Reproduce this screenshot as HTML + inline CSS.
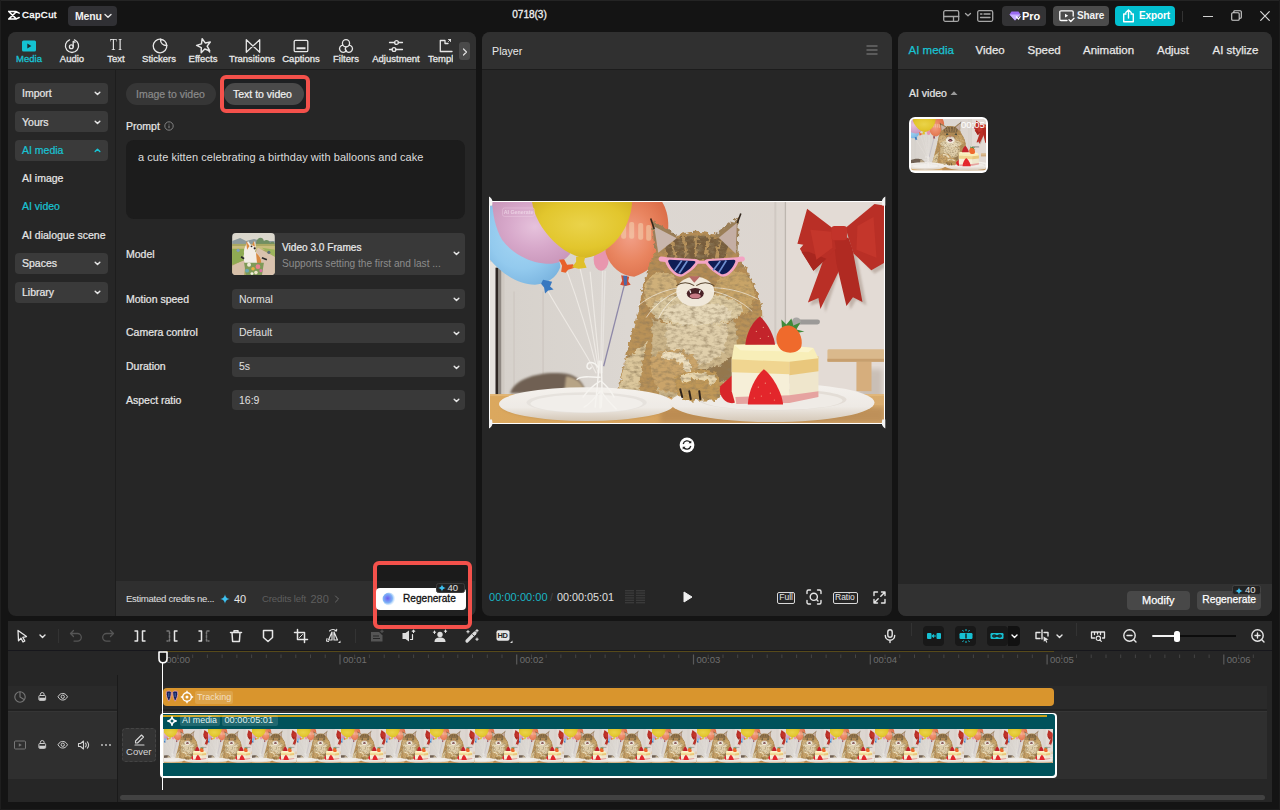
<!DOCTYPE html>
<html lang="en">
<head>
<meta charset="utf-8">
<title>CapCut</title>
<style>
*{box-sizing:border-box;margin:0;padding:0}
html,body{width:1280px;height:810px;overflow:hidden;background:#141414}
body{position:relative;font-family:"Liberation Sans",sans-serif;font-size:11px;color:#e6e6e6;-webkit-font-smoothing:antialiased}
.abs{position:absolute}
.t{position:absolute;white-space:nowrap;line-height:14px;height:14px}
.panel{position:absolute;background:#262626;border-radius:8px;overflow:hidden}
.phead{position:absolute;left:0;top:0;right:0;height:38px;background:#303030;border-bottom:1px solid #1c1c1c}
svg{position:absolute;overflow:visible}
.ic{fill:none;stroke:#e6e6e6;stroke-width:1.3;stroke-linecap:round;stroke-linejoin:round}
.sbtn{position:absolute;left:15px;width:93px;height:21px;background:#3a3a3a;border-radius:4px}
.sel{position:absolute;left:232px;width:233px;height:20px;background:#393939;border-radius:4px}
#left .t,#right .t{margin-top:-.4px}
#tabs .t{-webkit-text-stroke:.3px currentColor;margin-top:0}
.sbtn2{background:#3a3a3a}
.chev{position:absolute;width:7px;height:7px}
</style>
</head>
<body>
<!--SYM-->
<svg width="0" height="0" style="position:absolute;left:-10px;top:-10px">
<defs>
<filter id="b1" x="-10%" y="-10%" width="120%" height="120%"><feGaussianBlur stdDeviation="1.2"/></filter>
<filter id="b2" x="-10%" y="-10%" width="120%" height="120%"><feGaussianBlur stdDeviation="2.500"/></filter>
<filter id="fur" x="-10%" y="-10%" width="120%" height="120%"><feTurbulence type="fractalNoise" baseFrequency=".22" numOctaves="2" seed="4" result="n"/><feDisplacementMap in="SourceGraphic" in2="n" scale="7" xChannelSelector="R" yChannelSelector="G" result="d"/><feTurbulence type="fractalNoise" baseFrequency=".16 .3" numOctaves="3" seed="9" result="n2"/><feColorMatrix in="n2" type="matrix" values="0 0 0 0 .28  0 0 0 0 .2  0 0 0 0 .1  0 0 0 1.700 -.7" result="tex"/><feComposite in="tex" in2="d" operator="in" result="texc"/><feMerge><feMergeNode in="d"/><feMergeNode in="texc"/></feMerge><feGaussianBlur stdDeviation=".45"/></filter>
<filter id="b05" x="-10%" y="-10%" width="120%" height="120%"><feGaussianBlur stdDeviation=".5"/></filter>
<linearGradient id="wallg" x1="0" x2="1" y1="0" y2="0"><stop offset="0" stop-color="#d6d1cb"/><stop offset=".35" stop-color="#dcd7d2"/><stop offset=".75" stop-color="#ddd6d0"/><stop offset="1" stop-color="#e6ddd6"/></linearGradient>
<linearGradient id="tableg" x1="0" x2="1" y1="0" y2="0"><stop offset="0" stop-color="#dba85e"/><stop offset=".5" stop-color="#d6a35f"/><stop offset="1" stop-color="#d9ac6e"/></linearGradient>
<radialGradient id="blueg" cx=".45" cy=".35" r=".75"><stop offset="0" stop-color="#a8d8f4"/><stop offset=".6" stop-color="#93caee"/><stop offset="1" stop-color="#78b2de"/></radialGradient>
<radialGradient id="pinkg" cx=".55" cy=".4" r=".7"><stop offset="0" stop-color="#e6c2dc"/><stop offset=".5" stop-color="#d7a8ca"/><stop offset="1" stop-color="#c794b8"/></radialGradient>
<radialGradient id="yellowg" cx=".5" cy=".4" r=".7"><stop offset="0" stop-color="#ead34a"/><stop offset=".6" stop-color="#e2c62d"/><stop offset="1" stop-color="#cfae1e"/></radialGradient>
<radialGradient id="orangeg" cx=".4" cy=".45" r=".7"><stop offset="0" stop-color="#f2a089"/><stop offset=".5" stop-color="#e98560"/><stop offset="1" stop-color="#d96a45"/></radialGradient>
<radialGradient id="furg" cx=".5" cy=".45" r=".6"><stop offset="0" stop-color="#efe4cc"/><stop offset=".55" stop-color="#e3d1ab"/><stop offset="1" stop-color="#c29c62"/></radialGradient>
<linearGradient id="plateg" x1="0" x2="0" y1="0" y2="1"><stop offset="0" stop-color="#f4f1ed"/><stop offset=".6" stop-color="#eeeae5"/><stop offset="1" stop-color="#d4c7b6"/></linearGradient>
<symbol id="cat" viewBox="0 0 394 222" preserveAspectRatio="xMidYMid slice">
<rect width="394" height="222" fill="url(#wallg)"/>
<!-- door left -->
<rect x="0" y="60" width="6" height="135" fill="#e6e2dd"/>
<rect x="5.500" y="66" width="3" height="128" fill="#2e2824" filter="url(#b05)"/>
<rect x="8.500" y="66" width="3" height="128" fill="#8f8882" filter="url(#b05)"/>
<rect x="11.500" y="66" width="3" height="128" fill="#cfc9c2"/>
<path d="M24 90V190M53 90V185" stroke="#cfc9c3" stroke-width="1.500" fill="none"/>
<!-- right door -->
<rect x="296" y="0" width="98" height="200" fill="#e3dbd5"/>
<path d="M295 0V200" stroke="#bdb5ae" stroke-width="1.200"/>
<path d="M285 0V200" stroke="#d0c9c3" stroke-width="2"/>
<!-- handle -->
<path d="M305 120.500H327" stroke="#9c9a98" stroke-width="5" stroke-linecap="round"/>
<circle cx="306" cy="120.500" r="4.500" fill="#a8a6a4"/>
<path d="M306 128H328" stroke="#c5beb8" stroke-width="4" stroke-linecap="round" filter="url(#b1)"/>
<!-- small table right -->
<path d="M368 168H392V200H368Z" fill="#c9bfb6" filter="url(#b2)"/>
<rect x="366" y="160" width="15" height="30" fill="#d6ae7d"/>
<rect x="337" y="148" width="57" height="12.500" rx="1.500" fill="#dab98c"/>
<rect x="337" y="157.500" width="57" height="3" fill="#c79f6e"/>
<!-- bow shadow -->
<path d="M312 44L326 72L332 62L320 104L333 100L335 111L350 66L360 108L366 98L376 104L366 52L384 72L394 66V10Z" fill="#b9aaa0" filter="url(#b1)" opacity=".8"/>
<!-- bow -->
<g fill="#b92f26">
<path d="M341 36L317.500 101L328 96.500L330 107.500L352 62V36Z"/>
<path d="M343 36H358L362 47L372 100.500L362.500 95.700L356 104.500L346 62Z" fill="#b02a22"/>
<path d="M316.700 6.800L342 26L345.500 47L323 69L309.500 47L313 43L307 42Z"/>
<path d="M311 50L323 69L336 57L318 50Z" fill="#a8261f"/>
<path d="M384 2L394 3.500V61L380.800 68.500L363 51.600L355 26Z"/>
<path d="M367 24L383 15L386 56L366 48Z" fill="#c4362b"/>
<path d="M320 28L341 30L342 46L326 58Z" fill="#c4362b"/>
<rect x="341" y="24" width="15.500" height="14.500" rx="3" fill="#c2332a"/>
</g>
<!-- strings -->
<g fill="none" stroke="#efebe6" stroke-width="1.100" opacity=".95">
<path d="M58 90C75 120 95 150 106 172"/><path d="M77 70C88 100 100 140 108 172"/><path d="M90 67C98 100 104 140 109 172"/><path d="M100 70C104 110 108 150 110 172"/>
</g>
<path d="M112.500 69L110.500 172M115 69L112 172" stroke="#e8e4e0" stroke-width="1.300" fill="none"/>
<path d="M134 84L113.500 165" stroke="#8e88a8" stroke-width="1.300" fill="none"/>
<!-- balloons -->
<ellipse cx="111" cy="58" rx="7.500" ry="11" fill="#e896ae"/>
<path d="M0 4C10 0 30 10 45 30C60 48 72 58 70 66C66 76 58 82 45 83C28 83 12 72 0 58Z" fill="url(#blueg)"/>
<path d="M53 78L62 80L60 85L63.500 88L58 89L55 92L54 86L51 82Z" fill="#3878c0"/>
<path d="M2 0H60L80 52C74 60 66 62.500 56 62C40 61 22 52 12 38C5 26 3 12 2 0Z" fill="url(#pinkg)"/>
<path d="M69 58L74 57.500L77 63L83 62.500L84.500 66L78 68L75.500 71L71 70L72 64Z" fill="#e8612a"/>
<path d="M141.500 0L172 0C178 10 180 24 176 40C172 56 160 70 144 75C130 74 118 64 115 48C114 30 125 10 141.500 0Z" fill="url(#orangeg)"/>
<g fill="#f3d9b6" opacity=".5"><rect x="131" y="21" width="5" height="16" rx="2"/><rect x="139" y="20" width="5" height="17" rx="2"/><rect x="148" y="21" width="5" height="17" rx="2"/><rect x="156" y="23" width="5" height="16" rx="2"/></g>
<path d="M131 73.500L139 75L138 79.500L140.500 83L135 84.500L130 83L132 79Z" fill="#d24a32"/><path d="M133 74L137 74L136.500 84L134 84Z" fill="#4a6aa8"/>
<path d="M42 0H142C141 14 136 28 124 41C114 51 104 55 94 56.500C82 54 72 48 64 40C52 28 44 14 42 0Z" fill="url(#yellowg)"/>
<path d="M86 55H95L94 60L96.500 66L88.500 67L82 65.500L86 60Z" fill="#e0c02a"/>
<!-- table -->
<rect x="0" y="193" width="394" height="29" fill="url(#tableg)"/>
<rect x="0" y="193" width="394" height="2" fill="#e6be82" opacity=".6"/>
<path d="M170 206H394V222H170Z" fill="#a87a48" opacity=".55" filter="url(#b2)"/>
<!-- tail -->
<path d="M20 192C24 178 48 170 72 172C84 173 92 178 96 192Z" fill="#6f6152" filter="url(#b1)"/>
<path d="M76 175C86 176 93 182 96 192H74Z" fill="#b7a486" filter="url(#b1)"/>
<!-- cat body -->
<g filter="url(#fur)">
<path d="M150 100C146 116 140 140 135 158C130 176 127 188 127 197H252L262 150C270 136 274 120 271 104C268 92 262 80 254 70L158 76Z" fill="#b99259"/>
<path d="M136 158C132 172 128 186 128 196H150C148 176 152 156 158 140Z" fill="#dcc79c"/>
<path d="M166 104C158 128 160 164 170 196H240C250 164 250 128 240 104Z" fill="#cdb78c"/>
<path d="M178 112C172 130 176 150 186 160C200 166 222 164 232 152C240 136 238 120 232 110Z" fill="#e0cfab"/>
<path d="M172 150C180 160 196 168 210 168C224 168 238 162 246 150L244 176C232 184 190 184 176 176Z" fill="#94774e"/>
<!-- ears -->
<path d="M161.500 18.400L165 52L192 36Z" fill="#9c7f58"/>
<path d="M248.600 14.200L222 35L247 54Z" fill="#9c7f58"/>
<!-- head -->
<path d="M206 30C228 30 246 42 252 62C262 76 270 92 268 106C260 118 240 124 206 124C172 124 154 118 150 106C150 92 154 76 160 62C166 42 184 30 206 30Z" fill="#b48c54"/>
<path d="M174 42C186 31 226 31 238 42L234 58H178Z" fill="#775d3c"/>
<path d="M181 38L186 56M193 34L196 55M206 33V55M219 34L216 55M230 38L226 56" stroke="#b8935c" stroke-width="3" fill="none"/>
<ellipse cx="172" cy="92" rx="18" ry="22" fill="#cfb07a"/>
<ellipse cx="244" cy="92" rx="20" ry="24" fill="#c8a468"/>
<ellipse cx="207" cy="108" rx="46" ry="17" fill="#dccaa2"/><ellipse cx="207" cy="112" rx="34" ry="12" fill="#e6d8b8"/>
</g>
<g filter="url(#b05)">
<path d="M164 24.500L168 51L186.500 36.500Z" fill="#c9b6ac"/>
<path d="M246.500 21L228.500 36L245.500 52Z" fill="#c4aea4"/>
<path d="M160.500 16.500L164 27" stroke="#33261c" stroke-width="1.600"/>
<path d="M250.500 11.500L247 21" stroke="#33261c" stroke-width="1.600"/>
<ellipse cx="205" cy="90" rx="19" ry="15" fill="#f0e8da"/>
<path d="M186 84C192 80 198 80 204 84M206 84C212 80 218 80 224 84" stroke="#5a4630" stroke-width="1" fill="none"/>
<path d="M198.500 74.500H210L204 81Z" fill="#b76a66"/>
<ellipse cx="205" cy="92" rx="8.500" ry="5.500" fill="#4a2226"/>
<ellipse cx="205" cy="94.500" rx="5.500" ry="2.500" fill="#c77a84"/>
<path d="M199.500 88.500L200.500 91.500M210 88.500L209 91.500" stroke="#fff" stroke-width="1.200"/>
</g>
<!-- whiskers -->
<g stroke="#f7f3ec" stroke-width=".7" fill="none" opacity=".9"><path d="M190 86C175 88 160 94 148 104"/><path d="M190 89C176 94 164 104 156 116"/><path d="M191 92C180 98 172 108 168 118"/><path d="M220 86C236 86 254 90 268 98"/><path d="M220 89C236 92 252 100 262 110"/></g>
<!-- eyes -->
<g><ellipse cx="191" cy="66" rx="5" ry="3.500" fill="#2a2a22"/><ellipse cx="229" cy="66" rx="5" ry="3.500" fill="#2a2a22"/><circle cx="191" cy="66" r="2" fill="#6f9a8a"/><circle cx="229" cy="66" r="2" fill="#6f9a8a"/></g>
<!-- plates -->
<ellipse cx="96.500" cy="205" rx="86" ry="15" fill="#b98c4e" opacity=".5" filter="url(#b1)"/>
<ellipse cx="96.500" cy="203" rx="87.500" ry="17" fill="url(#plateg)"/>
<ellipse cx="96.500" cy="201.500" rx="60" ry="10.500" fill="#e6e2dd"/>
<ellipse cx="96.500" cy="202.500" rx="56" ry="9" fill="#f1eeea"/>
<!-- string bundle -->
<g fill="none" stroke="#f6f4f0" stroke-width="1.400" stroke-linecap="round"><path d="M109 160C108 180 106 196 105 206"/><path d="M111 160C112 180 112 196 111 206"/><path d="M110 176C100 176 92 174 87 178"/><path d="M110 180C100 186 96 192 93 196"/><path d="M111 180C118 186 122 192 124 196"/><path d="M108 166C104 160 98 160 97 164C96 168 101 169 101 166"/><path d="M110 190C104 198 98 204 94 206M111 190C116 198 122 204 126 208M110 190V207"/></g>
<ellipse cx="282" cy="203.500" rx="100" ry="17" fill="#b98c4e" opacity=".5" filter="url(#b1)"/>
<ellipse cx="282" cy="201.500" rx="102" ry="19.500" fill="url(#plateg)"/>
<ellipse cx="282" cy="198.500" rx="74" ry="11" fill="#e3ddd6"/>
<ellipse cx="282" cy="199.500" rx="70" ry="9.500" fill="#efebe6"/>
<!-- paws -->
<g filter="url(#fur)">
<path d="M164 154C172 146 198 146 206 158C210 170 204 186 194 192L172 190C160 180 158 164 164 154Z" fill="#caa46a"/>
<path d="M172 152C184 148 198 154 202 166L196 172C192 160 184 156 172 158Z" fill="#eddfbf"/>
<path d="M186 176C196 166 222 166 230 176C234 186 232 196 224 199.500H196C186 196 182 184 186 176Z" fill="#c09858"/>
<path d="M190 176C200 168 220 170 226 178L222 183C214 176 202 176 192 182Z" fill="#e8d6ae"/>
</g>
<path d="M190 188L192 196M199 190L200.500 198M209 190L210 198" stroke="#2e241c" stroke-width="2" stroke-linecap="round" filter="url(#b05)"/>
<!-- cake -->
<path d="M230 185C228 192 232 200 240 202C246 203 249 198 248 190L244 172Z" fill="#d8262a"/>
<path d="M241.400 158L299 160V200L245 203L241.400 190Z" fill="#f6efd8"/>
<path d="M299 160L328 157V195.500L299 201Z" fill="#efe6cc"/>
<path d="M241.400 156L299 158V173L241.400 171Z" fill="#f0d590"/>
<path d="M299 158L328 155V170L299 174Z" fill="#e9c77c"/>
<path d="M245 196L299 194V202L246 203ZM299 194L328 190V196L299 202Z" fill="#e6a3a0"/>
<path d="M243.800 143.400L284.700 142.600L323 146.600L328 157L299 160.500L241.400 158Z" fill="#f8eeb8"/>
<path d="M243.800 143.400L284.700 142.600L323 146.600L318 151L290 150L250 149Z" fill="#fbf4cc"/>
<!-- strawberries -->
<path d="M269.500 115C276 120 284 134 284.700 143.500L255 143.500C256 132 262 120 269.500 115Z" fill="#c3242b"/>
<path d="M291 118L296 123L301 117L303 124L310 121L306 128L314 130L304 132H292Z" fill="#3f8a3a"/>
<path d="M299 124C308 126 313 136 311 145C309 151 300 153 293 150C286 146 284 136 288 130C290 126 294 124 299 124Z" fill="#ef6a2c"/>
<path d="M273.500 168C282 174 292 192 292.700 203.500L257.500 203.500C258 190 265 175 273.500 168Z" fill="#e3262b"/>
<g fill="#f6c9a0" opacity=".7"><circle cx="268" cy="186" r=".6"/><circle cx="275" cy="182" r=".6"/><circle cx="280" cy="192" r=".6"/><circle cx="271" cy="195" r=".6"/><circle cx="264" cy="197" r=".6"/><circle cx="284" cy="199" r=".6"/><circle cx="266" cy="130" r=".6"/><circle cx="273" cy="126" r=".6"/><circle cx="270" cy="137" r=".6"/><circle cx="278" cy="135" r=".6"/></g>
</symbol>
</defs>
</svg>
<!--/SYM-->
<!-- TOPBAR -->
<div id="topbar" class="abs" style="left:0;top:0;width:1280px;height:32px">
<svg style="left:0;top:0" width="24" height="24" viewBox="0 0 24 24"><path d="M8.700 11.500H15.800L19.200 13.100M8.700 19.100H15.800L19.200 17.500M8.700 11.500L16.300 18.900M8.700 19.100L16.300 11.700" fill="none" stroke="#fff" stroke-width="1.500" stroke-linejoin="round" stroke-linecap="round"/></svg>
<div class="t" style="left:22px;top:8px;font-size:9.600px;color:#fff;letter-spacing:.4px;-webkit-text-stroke:.35px #fff">CapCut</div>
<div class="abs" style="left:68px;top:6px;width:49px;height:20px;background:#303034;border-radius:4px"></div>
<div class="t" style="left:75px;top:8.500px;font-size:10.5px;font-weight:bold;color:#f0f0f0;letter-spacing:-0.2px">Menu</div>
<svg style="left:104px;top:13px" width="8" height="6" viewBox="0 0 8 6"><path d="M1 1.500L4 4.300L7 1.500" class="ic" style="stroke-width:1.400"/></svg>
<div class="t" style="left:489.500px;top:7.500px;width:80px;text-align:center;font-size:10px;color:#f0f0f0;-webkit-text-stroke:.3px #f0f0f0">0718(3)</div>
<!-- layout icon -->
<svg style="left:943px;top:10px" width="17" height="12" viewBox="0 0 17 12"><rect x=".7" y=".7" width="15" height="10.600" rx="1.500" class="ic" style="stroke:#a6a6a6"/><path d="M.7 6.500H15.700M10.500 6.500V11.300" class="ic" style="stroke:#a6a6a6"/></svg>
<svg style="left:964px;top:12px" width="8" height="6" viewBox="0 0 8 6"><path d="M1.500 1.500L4 3.800L6.500 1.500" class="ic" style="stroke:#a6a6a6"/></svg>
<svg style="left:977px;top:10px" width="17" height="12" viewBox="0 0 17 12"><rect x=".7" y=".7" width="15" height="10.600" rx="1.500" class="ic" style="stroke:#a6a6a6"/><path d="M3.500 4H5M7 4H13M3.500 7.500H13" class="ic" style="stroke:#a6a6a6"/></svg>
<!-- Pro -->
<div class="abs" style="left:1002px;top:6px;width:44px;height:20px;background:#333335;border-radius:4px"></div>
<svg style="left:1009px;top:11px" width="12" height="10" viewBox="0 0 12 10"><path d="M2.500 .5H9.500L11.500 3.500L6 9.500L.5 3.500Z" fill="#9a6bf0"/><path d="M.5 3.500H11.500L6 9.500Z" fill="#c9b3ff"/><path d="M7 5.500L9.500 8L11.500 5" fill="none" stroke="#fff" stroke-width="1.200"/></svg>
<div class="t" style="left:1022px;top:8.500px;font-size:11px;font-weight:bold;color:#fff">Pro</div>
<!-- Share -->
<div class="abs" style="left:1053px;top:6px;width:56px;height:20px;background:#4b4b4b;border-radius:4px"></div>
<svg style="left:1059px;top:10px" width="16" height="13" viewBox="0 0 16 13"><path d="M8 10.500H2A1.200 1.200 0 0 1 .8 9.300V2A1.200 1.200 0 0 1 2 .8H13A1.200 1.200 0 0 1 14.200 2V6" class="ic" style="stroke:#fff"/><path d="M6 3.800V7.600L9.200 5.700Z" fill="#fff"/><path d="M10 9.800L11.800 11.500L15 8.200" class="ic" style="stroke:#fff"/></svg>
<div class="t" style="left:1077px;top:8.500px;font-size:10px;font-weight:bold;color:#f2f2f2;letter-spacing:-0.100px">Share</div>
<!-- Export -->
<div class="abs" style="left:1115px;top:6px;width:60px;height:20px;background:#02bfcf;border-radius:4px"></div>
<svg style="left:1122px;top:9px" width="13" height="14" viewBox="0 0 13 14"><path d="M4 5H1.700V12.800H11.300V5H9M6.500 9V1.200M3.800 3.600L6.500 1L9.200 3.600" class="ic" style="stroke:#fff;stroke-width:1.400"/></svg>
<div class="t" style="left:1139px;top:8.500px;font-size:10px;font-weight:bold;color:#fff;letter-spacing:-0.100px">Export</div>
<div class="abs" style="left:1182px;top:11px;width:1px;height:11px;background:#333"></div>
<div class="abs" style="left:1203px;top:15.500px;width:10px;height:1.200px;background:#d0d0d0"></div>
<svg style="left:1231px;top:10px" width="11" height="11" viewBox="0 0 11 11"><rect x=".7" y="2.700" width="7.500" height="7.500" rx="1" class="ic" style="stroke:#d0d0d0;stroke-width:1.100"/><path d="M2.800 2.500V1.700A1 1 0 0 1 3.800 .7H9.300A1 1 0 0 1 10.300 1.700V7.200A1 1 0 0 1 9.300 8.200H8.500" class="ic" style="stroke:#d0d0d0;stroke-width:1.100"/></svg>
<svg style="left:1260px;top:11px" width="10" height="10" viewBox="0 0 10 10"><path d="M.7 .7L9.300 9.300M9.300 .7L.7 9.300" class="ic" style="stroke:#d8d8d8;stroke-width:1.200"/></svg>
</div>
<!-- LEFT PANEL -->
<div id="left" class="panel" style="left:8px;top:32px;width:467.500px;height:584px">
<div class="phead"></div>
<div class="abs" style="left:107px;top:37px;width:1px;height:547px;background:#1d1d1d"></div>
<div id="tabs" class="abs" style="left:0;top:0;width:445px;height:37px;overflow:hidden">
<div class="t" style="left:-19px;width:80px;text-align:center;top:20px;font-size:9.500px;color:#19c3d3">Media</div>
<div class="t" style="left:24px;width:80px;text-align:center;top:20px;font-size:9.500px;color:#e8e8e8">Audio</div>
<div class="t" style="left:68px;width:80px;text-align:center;top:20px;font-size:9.500px;color:#e8e8e8">Text</div>
<div class="t" style="left:111px;width:80px;text-align:center;top:20px;font-size:9.500px;color:#e8e8e8">Stickers</div>
<div class="t" style="left:155px;width:80px;text-align:center;top:20px;font-size:9.500px;color:#e8e8e8">Effects</div>
<div class="t" style="left:204px;width:80px;text-align:center;top:20px;font-size:9.500px;color:#e8e8e8">Transitions</div>
<div class="t" style="left:253px;width:80px;text-align:center;top:20px;font-size:9.500px;color:#e8e8e8">Captions</div>
<div class="t" style="left:298px;width:80px;text-align:center;top:20px;font-size:9.500px;color:#e8e8e8">Filters</div>
<div class="t" style="left:348px;width:80px;text-align:center;top:20px;font-size:9.500px;color:#e8e8e8">Adjustment</div>
<div class="t" style="left:420px;top:20px;font-size:9.500px;color:#e8e8e8">Templates</div>
<svg style="left:13.0px;top:5.5px" width="16" height="16" viewBox="0 0 16 16"><rect x="1" y="2.500" width="14" height="11" rx="1.500" fill="#14c2d2"/><path d="M6.300 5.600V10.400L10.400 8Z" fill="#1d2a2c"/></svg>
<svg style="left:56.0px;top:5.5px" width="16" height="16" viewBox="0 0 16 16"><path d="M10.500 1.800A6.600 6.600 0 1 1 5.500 1.800" class="ic"/><circle cx="7.300" cy="8.800" r="1.900" class="ic"/><path d="M9.200 8.800V3.300L11 4.300" class="ic"/></svg>
<div class="t" style="left:88px;width:40px;text-align:center;top:4px;height:18px;line-height:18px;font-family:'Liberation Serif',serif;font-size:16.500px;color:#e8e8e8;letter-spacing:2.200px;text-indent:2.200px;transform:scaleX(.68);-webkit-text-stroke:0">TI</div>
<svg style="left:144.0px;top:5.5px" width="16" height="16" viewBox="0 0 16 16"><path d="M8.500 1.200A6.800 6.800 0 1 0 14.800 7.500" class="ic"/><path d="M8.500 1.200C8.300 5 11 7.700 14.800 7.500C14.300 4.300 11.700 1.700 8.500 1.200Z" class="ic"/></svg>
<svg style="left:187.5px;top:5.5px" width="16" height="16" viewBox="0 0 16 16"><path d="M8 1.200L9.700 5.600L14.300 5.900L10.700 8.800L11.900 13.300L8 10.800L4.100 13.300L5.300 8.800L1.700 5.900L6.300 5.600Z" class="ic" transform="rotate(-14 8 8) translate(8 8) scale(1.120) translate(-8 -8)"/><path d="M12.300 12.300L13.800 14" class="ic"/></svg>
<svg style="left:236.5px;top:5.5px" width="16" height="16" viewBox="0 0 16 16"><path d="M1.300 1.700V14.300L14.700 1.700V14.300Z" class="ic"/></svg>
<svg style="left:285.0px;top:5.5px" width="16" height="16" viewBox="0 0 16 16"><rect x="1.200" y="2.300" width="13.600" height="11.400" rx="1.300" class="ic"/><path d="M3.500 9.200H12.500V11.300H3.500Z" fill="#e6e6e6"/></svg>
<svg style="left:330.0px;top:5.5px" width="16" height="16" viewBox="0 0 16 16"><circle cx="8" cy="5.200" r="3.600" class="ic"/><path d="M4.900 7.100A3.600 3.600 0 1 0 8.300 12.400" class="ic"/><path d="M11.100 7.100A3.600 3.600 0 1 1 7.700 12.400A3.600 3.600 0 0 1 8 8.800" class="ic"/></svg>
<svg style="left:380.0px;top:5.5px" width="16" height="16" viewBox="0 0 16 16"><path d="M1.500 4.500H6.700M10.300 4.500H14.500M1.500 11.500H4.200M7.800 11.500H14.500" class="ic"/><circle cx="8.500" cy="4.500" r="1.900" class="ic"/><circle cx="6" cy="11.500" r="1.900" class="ic"/></svg>
<svg style="left:430.0px;top:5.5px" width="16" height="16" viewBox="0 0 16 16"><path d="M7 2.500H2.300V13.500H14M7 2.500V5.500H10" class="ic"/><path d="M10.500 3.500L12.500 1.500M12.500 1.500V3.500M12.500 1.500H10.500" class="ic" style="stroke-width:.9"/></svg>
</div>
<div class="abs" style="left:451px;top:10px;width:11px;height:18px;background:#4a4a4a;border-radius:3px"></div>
<svg style="left:453.500px;top:15.500px" width="6" height="8" viewBox="0 0 6 8"><path d="M1.500 1L4.500 4L1.500 7" fill="none" stroke="#e0e0e0" stroke-width="1.200" stroke-linecap="round" stroke-linejoin="round"/></svg>
<div class="abs" style="left:7px;top:51px;width:93px;height:21px;background:#3a3a3a;border-radius:4px"></div><div class="t" style="left:14px;top:54.5px;font-size:10.5px;color:#e6e6e6;-webkit-text-stroke:.22px currentColor;">Import</div><svg style="left:85.5px;top:58.0px" width="7" height="7" viewBox="0 0 7 7"><path d="M1.200 2.300L3.500 4.500L5.800 2.300" fill="none" stroke="#e6e6e6" stroke-width="1.500" stroke-linecap="round" stroke-linejoin="round"/></svg>
<div class="abs" style="left:7px;top:79px;width:93px;height:21px;background:#3a3a3a;border-radius:4px"></div><div class="t" style="left:14px;top:83.0px;font-size:10.5px;color:#e6e6e6;-webkit-text-stroke:.22px currentColor;">Yours</div><svg style="left:85.5px;top:86.5px" width="7" height="7" viewBox="0 0 7 7"><path d="M1.200 2.300L3.500 4.500L5.800 2.300" fill="none" stroke="#e6e6e6" stroke-width="1.500" stroke-linecap="round" stroke-linejoin="round"/></svg>
<div class="abs" style="left:7px;top:107.5px;width:93px;height:21px;background:#3a3a3a;border-radius:4px"></div><div class="t" style="left:14px;top:111.0px;font-size:10.5px;color:#19c3d3;-webkit-text-stroke:.22px currentColor;">AI media</div><svg style="left:85.5px;top:114.5px" width="7" height="7" viewBox="0 0 7 7"><path d="M1.200 4.500L3.500 2.300L5.800 4.500" fill="none" stroke="#19c3d3" stroke-width="1.500" stroke-linecap="round" stroke-linejoin="round"/></svg>
<div class="t" style="left:14px;top:139px;font-size:10.5px;color:#e6e6e6;-webkit-text-stroke:.22px currentColor;">AI image</div>
<div class="t" style="left:14px;top:167.5px;font-size:10.5px;color:#19c3d3;-webkit-text-stroke:.22px currentColor;">AI video</div>
<div class="t" style="left:14px;top:196px;font-size:10.5px;color:#e6e6e6;-webkit-text-stroke:.22px currentColor;">AI dialogue scene</div>
<div class="abs" style="left:7px;top:221px;width:93px;height:21px;background:#3a3a3a;border-radius:4px"></div><div class="t" style="left:14px;top:224.5px;font-size:10.5px;color:#e6e6e6;-webkit-text-stroke:.22px currentColor;">Spaces</div><svg style="left:85.5px;top:228.0px" width="7" height="7" viewBox="0 0 7 7"><path d="M1.200 2.300L3.500 4.500L5.800 2.300" fill="none" stroke="#e6e6e6" stroke-width="1.500" stroke-linecap="round" stroke-linejoin="round"/></svg>
<div class="abs" style="left:7px;top:249.5px;width:93px;height:21px;background:#3a3a3a;border-radius:4px"></div><div class="t" style="left:14px;top:253.0px;font-size:10.5px;color:#e6e6e6;-webkit-text-stroke:.22px currentColor;">Library</div><svg style="left:85.5px;top:256.5px" width="7" height="7" viewBox="0 0 7 7"><path d="M1.200 2.300L3.500 4.500L5.800 2.300" fill="none" stroke="#e6e6e6" stroke-width="1.500" stroke-linecap="round" stroke-linejoin="round"/></svg>
<div class="abs" style="left:118px;top:51px;width:90px;height:22px;background:#363636;border-radius:11px"></div>
<div class="t" style="left:128px;top:55px;font-size:10.5px;color:#8a8a8a;-webkit-text-stroke:.22px currentColor;">Image to video</div>
<div class="abs" style="left:212.300px;top:43.300px;width:90.200px;height:37.500px;border:4px solid #f4514b;border-radius:6px;background:#1e2022"></div>
<div class="abs" style="left:215.5px;top:51px;width:80px;height:22px;background:#4a4a4a;border-radius:11px"></div>
<div class="t" style="left:225px;top:55px;font-size:10.5px;color:#f0f0f0;-webkit-text-stroke:.22px currentColor;">Text to video</div>
<div class="t" style="left:118px;top:87px;font-size:10.5px;color:#e6e6e6;-webkit-text-stroke:.22px currentColor;">Prompt</div>
<svg style="left:155.500px;top:88.700px" width="10" height="10" viewBox="0 0 10 10"><circle cx="5" cy="5" r="4.200" fill="none" stroke="#8a8a8a" stroke-width=".9"/><path d="M5 4.500V7.200M5 2.800V3.500" stroke="#8a8a8a" stroke-width="1" fill="none"/></svg>
<div class="abs" style="left:118px;top:108px;width:339px;height:78.500px;background:#1c1c1c;border-radius:8px"></div>
<div class="t" style="left:130px;top:118px;font-size:11px;letter-spacing:.06px;color:#dcdcdc;">a cute kitten celebrating a birthday with balloons and cake</div>
<div class="t" style="left:118px;top:215px;font-size:10.5px;color:#e6e6e6;-webkit-text-stroke:.22px currentColor;">Model</div>
<div class="abs" style="left:224px;top:201px;width:233px;height:42px;background:#393939;border-radius:4px"></div>
<svg style="left:224px;top:200.7px;border-radius:4px;overflow:hidden" width="43" height="42.600" viewBox="0 0 43 43">
<defs><linearGradient id="msky" x1="0" x2="0" y1="0" y2="1"><stop offset="0" stop-color="#d9d6cc"/><stop offset="1" stop-color="#e6ddd0"/></linearGradient><filter id="mb"><feGaussianBlur stdDeviation=".7"/></filter></defs>
<rect width="43" height="43" fill="url(#msky)"/>
<g filter="url(#mb)">
<path d="M0 8L8 5L14 8L22 6L30 8H43V14H0Z" fill="#8d9a9c"/>
<path d="M24 10C25 4 31 3 32 8C34 6 38 7 38 10C41 8 43 9 43 12V15H24Z" fill="#6f8e62"/>
<rect x="0" y="11" width="43" height="32" fill="#aaa862"/>
<path d="M0 13H43V17H0Z" fill="#c8bc7c"/>
<path d="M26 15L43 24V43H22C18 34 20 24 26 15Z" fill="#d9c2ae"/>
<path d="M0 33L14 26L12 43H0Z" fill="#d6bfa8"/>
<path d="M0 16L12 16L14 27L0 32Z" fill="#8eaa52"/>
<path d="M30 15L43 17V24Z" fill="#9cb45c"/>
<path d="M12 21C11 16 14 12 16 8L19 12L21 11L23 8C24 12 24 16 23 19C27 22 30 26 29 30L22 34L14 32C11 28 11 24 12 21Z" fill="#f2ede6"/>
<path d="M14 8L17.500 13L15 17ZM22 8L23 14L20 12ZM24 20C28 23 30 27 29 31L25 30Z" fill="#d98a42"/>
<circle cx="19.500" cy="13.500" r=".9" fill="#2a2220"/><circle cx="22.700" cy="15.500" r="1.100" fill="#2a2220"/>
<circle cx="6" cy="17.500" r="1.600" fill="#7f9cc0"/><circle cx="37" cy="19.500" r="1.600" fill="#5f7078"/>
<path d="M9 24L12 26M30 25L35 27" stroke="#2a2a2a" stroke-width="1.800"/>
<path d="M12 30H32L30 43H14Z" fill="#7f9a58"/>
<circle cx="26" cy="34" r="2.400" fill="#e8808c"/><circle cx="21" cy="36" r="1.800" fill="#e8b040"/><circle cx="17" cy="32" r="2" fill="#f0ead8"/><circle cx="24" cy="40" r="1.800" fill="#f0e6c8"/><circle cx="29" cy="38" r="1.600" fill="#d870a0"/><circle cx="15" cy="38" r="2" fill="#6aa8b0"/><circle cx="20" cy="41" r="1.500" fill="#f4f0e0"/>
</g></svg>
<div class="t" style="left:274px;top:209.500px;font-size:10.100px;color:#eaeaea;-webkit-text-stroke:.22px currentColor;">Video 3.0 Frames</div>
<div class="t" style="left:274px;top:225.500px;font-size:10.150px;color:#8c8c8c;">Supports setting the first and last ...</div>
<svg style="left:445.0px;top:218.0px" width="7" height="7" viewBox="0 0 7 7"><path d="M1.200 2.300L3.500 4.500L5.800 2.300" fill="none" stroke="#e6e6e6" stroke-width="1.500" stroke-linecap="round" stroke-linejoin="round"/></svg>
<div class="t" style="left:118px;top:260px;font-size:10.5px;color:#e6e6e6;-webkit-text-stroke:.22px currentColor;">Motion speed</div>
<div class="abs" style="left:224px;top:257px;width:233px;height:20px;background:#393939;border-radius:4px"></div>
<div class="t" style="left:231px;top:260px;font-size:10.5px;color:#e0e0e0;">Normal</div>
<svg style="left:445.0px;top:264.0px" width="7" height="7" viewBox="0 0 7 7"><path d="M1.200 2.300L3.500 4.500L5.800 2.300" fill="none" stroke="#e6e6e6" stroke-width="1.500" stroke-linecap="round" stroke-linejoin="round"/></svg>
<div class="t" style="left:118px;top:293.8px;font-size:10.5px;color:#e6e6e6;-webkit-text-stroke:.22px currentColor;">Camera control</div>
<div class="abs" style="left:224px;top:290.8px;width:233px;height:20px;background:#393939;border-radius:4px"></div>
<div class="t" style="left:231px;top:293.8px;font-size:10.5px;color:#e0e0e0;">Default</div>
<svg style="left:445.0px;top:297.8px" width="7" height="7" viewBox="0 0 7 7"><path d="M1.200 2.300L3.500 4.500L5.800 2.300" fill="none" stroke="#e6e6e6" stroke-width="1.500" stroke-linecap="round" stroke-linejoin="round"/></svg>
<div class="t" style="left:118px;top:327.5px;font-size:10.5px;color:#e6e6e6;-webkit-text-stroke:.22px currentColor;">Duration</div>
<div class="abs" style="left:224px;top:324.5px;width:233px;height:20px;background:#393939;border-radius:4px"></div>
<div class="t" style="left:231px;top:327.5px;font-size:10.5px;color:#e0e0e0;">5s</div>
<svg style="left:445.0px;top:331.5px" width="7" height="7" viewBox="0 0 7 7"><path d="M1.200 2.300L3.500 4.500L5.800 2.300" fill="none" stroke="#e6e6e6" stroke-width="1.500" stroke-linecap="round" stroke-linejoin="round"/></svg>
<div class="t" style="left:118px;top:361.2px;font-size:10.5px;color:#e6e6e6;-webkit-text-stroke:.22px currentColor;">Aspect ratio</div>
<div class="abs" style="left:224px;top:358.2px;width:233px;height:20px;background:#393939;border-radius:4px"></div>
<div class="t" style="left:231px;top:361.2px;font-size:10.5px;color:#e0e0e0;">16:9</div>
<svg style="left:445.0px;top:365.2px" width="7" height="7" viewBox="0 0 7 7"><path d="M1.200 2.300L3.500 4.500L5.800 2.300" fill="none" stroke="#e6e6e6" stroke-width="1.500" stroke-linecap="round" stroke-linejoin="round"/></svg>
<div class="abs" style="left:108px;top:548.5px;width:359px;height:36px;background:#2f2f2f"></div>
<div class="t" style="left:118px;top:560.400px;font-size:9.600px;letter-spacing:-.29px;color:#e0e0e0;">Estimated credits ne...</div>
<svg style="left:212px;top:562px" width="10" height="10" viewBox="0 0 10 10"><path d="M5 .3C5.300 3 6.800 4.600 9.700 5C6.800 5.400 5.300 7 5 9.700C4.700 7 3.200 5.400 .3 5C3.200 4.600 4.700 3 5 .3Z" fill="#3dc0f0"/></svg>
<div class="t" style="left:226px;top:560.400px;font-size:11px;color:#e6e6e6;">40</div>
<div class="t" style="left:254px;top:560.400px;font-size:9.600px;letter-spacing:-.15px;color:#5e5e5e;">Credits left</div>
<div class="t" style="left:302.5px;top:560.400px;font-size:11px;color:#5e5e5e;">280</div>
<svg style="left:326px;top:562.5px" width="6" height="8" viewBox="0 0 6 8"><path d="M1.500 1L4.500 4L1.500 7" fill="none" stroke="#6a6a6a" stroke-width="1" stroke-linecap="round" stroke-linejoin="round"/></svg>
</div>
<!-- PLAYER -->
<div id="player" class="panel" style="left:482px;top:32px;width:410px;height:584px">
<div class="phead"></div>
<div class="t" style="left:10px;top:11.5px;font-size:10.700px;color:#e8e8e8;">Player</div>
<svg style="left:384px;top:12px" width="12" height="12" viewBox="0 0 12 12"><path d="M.5 2H11.500M.5 6H11.500M.5 10H11.500" stroke="#6a6a6a" stroke-width="1.300" fill="none"/></svg>
<div id="video" class="abs" style="left:7px;top:169px;width:396px;height:223px;background:#fff"><svg style="left:.5px;top:1px;overflow:hidden" width="394.500" height="221" viewBox="0 0 394 222" preserveAspectRatio="none"><use href="#cat" width="394" height="222"/><rect x="12.500" y="6" width="32" height="8.500" rx="2" fill="none" stroke="#f3d9ea" stroke-width=".6" opacity=".6"/>
<text x="28.500" y="12.300" text-anchor="middle" font-family="Liberation Sans, sans-serif" font-size="5.300" font-weight="bold" fill="#f6e4f0" opacity=".65">AI Generate</text><g><path d="M169.500 55.300C171 54.300 174 55 176 55.600L205 57.200C207 57.400 208.500 58.300 209 59L214 59C214.500 58.300 216 57.400 218 57.200L247 55.600C249 55 252 54.300 253.500 55.300C255.500 56.700 254.500 59.500 252.500 59.800L248 60.200C246 66 240 73 235.500 74.600C233.500 75.300 231.500 75 229.500 74C223 70.500 217.500 65.500 215.500 62L207.500 62C205.500 65.500 200 70.500 193.500 74C191.500 75 189.500 75.300 187.500 74.600C183 73 177 66 175 60.200L170.500 59.800C168.500 59.500 167.500 56.700 169.500 55.300Z" fill="#f4a4c4"/>
<path d="M179.500 58C178 58 177.600 59 178.200 60.500C180.500 66 184.500 70.500 188.500 72.200C190 72.800 191.500 72.600 193 71.700C198 68.800 202.500 64.500 204.800 61.200C205.500 60.200 205 59.400 203.800 59.300Z" fill="#0f1c55"/>
<path d="M243.500 58C245 58 245.400 59 244.800 60.500C242.500 66 238.500 70.500 234.500 72.200C233 72.800 231.500 72.600 230 71.700C225 68.800 220.500 64.500 218.200 61.200C217.500 60.200 218 59.400 219.200 59.300Z" fill="#0f1c55"/>
<path d="M191.500 58.900L184.500 69M197 59.200L189 71.500M230 59.300L223 68.500M236 58.800L228.500 71" stroke="#6f8fd0" stroke-width="1.700"/></g></svg></div>
<svg style="left:0;top:0" width="410" height="584" viewBox="482 32 410 584"><path d="M489 196.500C491 197.500 492.500 199.500 492.500 202L492 205.500H489ZM885.300 196.500C883.300 197.500 881.800 199.500 881.800 202L882.300 205.500H885.300ZM489 428.500C491 427.500 492.500 425.500 492.500 423L492 419.500H489ZM885.300 428.500C883.300 427.500 881.800 425.500 881.800 423L882.300 419.500H885.300Z" fill="#f4f4f4"/></svg>
<svg style="left:196.5px;top:405px" width="16" height="16" viewBox="0 0 16 16"><circle cx="8" cy="8" r="7.400" fill="#fff"/><path d="M4.200 7A4 4 0 0 1 11.300 5.500M11.800 9A4 4 0 0 1 4.700 10.500" fill="none" stroke="#222" stroke-width="1.300"/><path d="M12.300 3.500V6.300H9.500ZM3.700 12.500V9.700H6.500Z" fill="#222"/></svg>
<div class="t" style="left:7px;top:558px;font-size:11px;letter-spacing:.05px;color:#19b5c5;">00:00:00:00</div>
<div class="t" style="left:68px;top:558px;font-size:10.5px;color:#4a4a4a;">/</div>
<div class="t" style="left:75px;top:558px;font-size:10.800px;color:#e0e0e0;">00:00:05:01</div>
<svg style="left:143px;top:557.5px" width="20" height="14" viewBox="0 0 20 14"><rect x="0" y="0.0" width="9" height="1.400" fill="#3a3a3a"/><rect x="0" y="2.4" width="9" height="1.400" fill="#3a3a3a"/><rect x="0" y="4.8" width="9" height="1.400" fill="#3a3a3a"/><rect x="0" y="7.199999999999999" width="9" height="1.400" fill="#3a3a3a"/><rect x="0" y="9.6" width="9" height="1.400" fill="#3a3a3a"/><rect x="0" y="12.0" width="9" height="1.400" fill="#3a3a3a"/><rect x="11" y="0.0" width="9" height="1.400" fill="#3a3a3a"/><rect x="11" y="2.4" width="9" height="1.400" fill="#3a3a3a"/><rect x="11" y="4.8" width="9" height="1.400" fill="#3a3a3a"/><rect x="11" y="7.199999999999999" width="9" height="1.400" fill="#3a3a3a"/><rect x="11" y="9.6" width="9" height="1.400" fill="#3a3a3a"/><rect x="11" y="12.0" width="9" height="1.400" fill="#3a3a3a"/></svg>
<svg style="left:200px;top:558px" width="12" height="14" viewBox="0 0 12 14"><path d="M2 2V12L10 7Z" fill="#f0f0f0" stroke="#f0f0f0" stroke-width="1" stroke-linejoin="round"/></svg>
<div class="abs" style="left:295px;top:560.400px;width:17.500px;height:11.500px;border:1px solid #d8d8d8;border-radius:2px"></div>
<div class="t" style="left:297.299px;top:558px;font-size:8.5px;color:#e6e6e6;">Full</div>
<svg style="left:323.5px;top:556.5px" width="16" height="16" viewBox="0 0 16 16"><path d="M1 4.500V2.500A1.500 1.500 0 0 1 2.500 1H4.500M11.500 1H13.500A1.500 1.500 0 0 1 15 2.500V4.500M15 11.500V13.500A1.500 1.500 0 0 1 13.500 15H11.500M4.500 15H2.500A1.500 1.500 0 0 1 1 13.500V11.500" class="ic" style="stroke-width:1.400"/><circle cx="7.800" cy="7.800" r="3.600" class="ic" style="stroke-width:1.400"/><path d="M10.500 10.500L12 12" class="ic" style="stroke-width:1.400"/></svg>
<div class="abs" style="left:350.5px;top:560.400px;width:25.500px;height:11.500px;border:1px solid #d8d8d8;border-radius:2px"></div>
<div class="t" style="left:353px;top:558px;font-size:8.5px;color:#e6e6e6;">Ratio</div>
<svg style="left:391px;top:558.5px" width="13" height="13" viewBox="0 0 13 13"><path d="M1 4.500V1H4.500M8.500 1H12V4.500M12 8.500V12H8.500M4.500 12H1V8.500M11.500 1.500L7.800 5.200M1.500 11.500L5.200 7.800" class="ic" style="stroke-width:1.400"/></svg>
</div>
<!-- RIGHT PANEL -->
<div id="right" class="panel" style="left:898px;top:32px;width:374px;height:584px">
<div class="phead"></div>
<div class="t" style="left:10.5px;top:11.5px;font-size:11.5px;color:#19c3d3;-webkit-text-stroke:.25px currentColor;">AI media</div>
<div class="t" style="left:77.5px;top:11.5px;font-size:11.5px;color:#e8e8e8;-webkit-text-stroke:.25px currentColor">Video</div>
<div class="t" style="left:129.5px;top:11.5px;font-size:11.5px;color:#e8e8e8;-webkit-text-stroke:.25px currentColor">Speed</div>
<div class="t" style="left:185px;top:11.5px;font-size:11.5px;color:#e8e8e8;-webkit-text-stroke:.25px currentColor">Animation</div>
<div class="t" style="left:259px;top:11.5px;font-size:11.5px;color:#e8e8e8;-webkit-text-stroke:.25px currentColor">Adjust</div>
<div class="t" style="left:314.5px;top:11.5px;font-size:11.5px;color:#e8e8e8;-webkit-text-stroke:.25px currentColor">AI stylize</div>
<div class="t" style="left:11px;top:54px;font-size:10.5px;color:#e6e6e6;-webkit-text-stroke:.22px currentColor;">AI video</div>
<svg style="left:52px;top:58px" width="8" height="6" viewBox="0 0 8 6"><path d="M.5 5L4 1.300L7.500 5Z" fill="#9a9a9a"/></svg>
<div id="thumb" class="abs" style="left:11px;top:85px;width:79px;height:55.500px;border-radius:6px;background:#fff;overflow:hidden"><svg style="left:2px;top:2px;border-radius:4px;overflow:hidden" width="75" height="51.500"><use href="#cat" width="75" height="51.500"/></svg></div>
<div class="t" style="left:63px;top:86.5px;font-size:9.5px;color:#fff;">00:05</div>
<div class="abs" style="left:0;top:552.300px;width:374px;height:32px;background:#313131"></div>
<div class="abs" style="left:228.5px;top:558.5px;width:63.500px;height:19.500px;background:#484848;border-radius:4px"></div>
<div class="t" style="left:228.5px;width:63.500px;text-align:center;top:561.3px;font-size:11px;color:#fff;-webkit-text-stroke:.25px #fff">Modify</div>
<div class="abs" style="left:299.299px;top:558.5px;width:63.700px;height:19.500px;background:#484848;border-radius:4px"></div>
<div class="t" style="left:299.299px;width:63.700px;text-align:center;top:561.3px;font-size:10.300px;color:#fff;-webkit-text-stroke:.25px #fff">Regenerate</div>
<div class="abs" style="left:334.200px;top:553.3px;width:28.600px;height:10.200px;background:#222;border:1px solid #444;border-radius:2.500px"></div>
<svg style="left:336.500px;top:554.500px" width="8" height="8" viewBox="0 0 10 10"><path d="M5 .3C5.300 3 6.800 4.600 9.700 5C6.800 5.400 5.300 7 5 9.700C4.700 7 3.200 5.400 .3 5C3.200 4.600 4.700 3 5 .3Z" fill="#3dc0f0"/></svg>
<div class="t" style="left:347px;top:551.5px;font-size:9.5px;color:#e0e0e0;">40</div>
</div>
<!-- TIMELINE -->
<div id="timeline" class="panel" style="left:8px;top:621px;width:1264px;height:181px;border-radius:0;background:#262626">
<div class="abs" style="left:0;top:29px;width:1264px;height:1.200px;background:#17171c"></div>
<svg style="left:6.0px;top:7.0px" width="16" height="16" viewBox="0 0 16 16"><path d="M4 2.500L12.500 8.500L8.800 9.300L10.800 13L9 14L7 10.200L4.500 12.800Z" class="ic" style="stroke-width:1.300"/></svg>
<svg style="left:30.5px;top:12.0px" width="7" height="7" viewBox="0 0 7 7"><path d="M1 2L3.500 4.500L6 2" fill="none" stroke="#e6e6e6" stroke-width="1.400" stroke-linecap="round" stroke-linejoin="round"/></svg>
<div class="abs" style="left:50px;top:8px;width:1px;height:14px;background:#333"></div>
<svg style="left:60.0px;top:7.0px" width="16" height="16" viewBox="0 0 16 16"><path d="M5.500 2.500L2.500 5.500L5.500 8.500M2.500 5.500H9.500A3.800 3.800 0 0 1 9.500 13.100H6" class="ic" style="stroke:#555"/></svg>
<svg style="left:92.0px;top:7.0px" width="16" height="16" viewBox="0 0 16 16"><path d="M10.500 2.500L13.500 5.500L10.500 8.500M13.500 5.500H6.500A3.800 3.800 0 0 0 6.500 13.100H10" class="ic" style="stroke:#555"/></svg>
<svg style="left:124.0px;top:7.0px" width="16" height="16" viewBox="0 0 16 16"><path d="M3 3H5.500V13H3M13 3H10.500V13H13" class="ic" style="stroke-width:1.500"/></svg>
<svg style="left:156.0px;top:7.0px" width="16" height="16" viewBox="0 0 16 16"><path d="M3 3H5.500V13H3" class="ic" style="stroke:#777;stroke-width:1.500;stroke-dasharray:2 1.500"/><path d="M13 3H10.500V13H13" class="ic" style="stroke-width:1.500"/></svg>
<svg style="left:188.0px;top:7.0px" width="16" height="16" viewBox="0 0 16 16"><path d="M3 3H5.500V13H3" class="ic" style="stroke-width:1.500"/><path d="M13 3H10.500V13H13" class="ic" style="stroke:#777;stroke-width:1.500;stroke-dasharray:2 1.500"/></svg>
<svg style="left:220.0px;top:7.0px" width="16" height="16" viewBox="0 0 16 16"><path d="M2.500 4.500H13.500M6 4.500V2.800H10V4.500M4 4.500L4.600 13.500H11.400L12 4.500" class="ic" style="stroke-width:1.500"/></svg>
<svg style="left:252.0px;top:7.0px" width="16" height="16" viewBox="0 0 16 16"><path d="M3.500 2.500H12.500V9.500L8 13.500L3.500 9.500Z" class="ic" style="stroke-width:1.500"/></svg>
<svg style="left:284.5px;top:7.0px" width="16" height="16" viewBox="0 0 16 16"><path d="M4.500 1.500V11.500H14.500M1.500 4.500H11.500V14.500" class="ic" style="stroke-width:1.500"/><path d="M6.500 9.500L9.500 6.500" class="ic" style="stroke-width:1"/></svg>
<svg style="left:317.0px;top:7.0px" width="16" height="16" viewBox="0 0 16 16"><path d="M7 4L3.500 12H7ZM9 4L12.500 12H9Z" class="ic" style="stroke-width:1.200"/><path d="M4.500 3A5 5 0 0 1 11.500 3M11.500 3L11.700 1.200M11.500 3L9.800 2.800M2 10.500L1.500 13L3.500 13.500" class="ic" style="stroke-width:1.100"/><path d="M13 15H15.500V12.500Z" fill="#ddd"/></svg>
<div class="abs" style="left:346.5px;top:8px;width:1px;height:14px;background:#333"></div>
<svg style="left:360.5px;top:7.0px" width="16" height="16" viewBox="0 0 16 16"><path d="M2 4H10L13.500 7.500V13.500H2Z" fill="#555"/><path d="M4 8H10M4 10.500H11" stroke="#262626" stroke-width="1.200"/><path d="M13 1.500V5M11.300 3.200H14.700" stroke="#555" stroke-width="1.100"/></svg>
<svg style="left:392.0px;top:7.0px" width="16" height="16" viewBox="0 0 16 16"><path d="M2.500 5H5.500L9 2.500V13.500L5.500 11H2.500Z" fill="#ddd"/><path d="M12.500 6.500V11.500H10.500M13.500 2V4.500M12.300 3.200H14.700" class="ic" style="stroke-width:1.200"/></svg>
<svg style="left:424.0px;top:7.0px" width="16" height="16" viewBox="0 0 16 16"><circle cx="8" cy="6.500" r="2.700" fill="#ddd"/><path d="M2.500 14C2.500 10.500 5 9.500 8 9.500S13.500 10.500 13.500 14Z" fill="#ddd"/><path d="M2.500 3V5.500M1.300 4.200H3.700M13.500 2V4.500M12.300 3.200H14.700" class="ic" style="stroke-width:1"/></svg>
<svg style="left:456.0px;top:7.0px" width="16" height="16" viewBox="0 0 16 16"><path d="M3 13L11 5" stroke="#ddd" stroke-width="3.200" stroke-linecap="round"/><path d="M8.500 6.500L9.800 7.800" stroke="#1f1f1f" stroke-width="1"/><path d="M4 2.500V5M2.800 3.700H5.200M13 1.500V4M11.800 2.700H14.200M13 10V12.500M11.800 11.200H14.200" class="ic" style="stroke-width:1"/></svg>
<svg style="left:487.0px;top:6.0px" width="18" height="18" viewBox="0 0 18 18"><rect x="1.500" y="3.300" width="13" height="10.500" rx="2" fill="#e6e6e6"/><path d="M15 16H17.500V13.500Z" fill="#ddd"/></svg>
<div class="t" style="left:487.5px;width:14px;text-align:center;top:7.800px;font-size:7.500px;font-weight:bold;color:#1f1f1f;letter-spacing:-.3px">HD</div>
<svg style="left:873.5px;top:7.0px" width="16" height="16" viewBox="0 0 16 16"><rect x="5.800" y="1.800" width="4.400" height="7.500" rx="2.200" class="ic" style="stroke-width:1.400"/><path d="M3.300 7.500A4.700 4.700 0 0 0 12.700 7.500M8 12.200V14.500" class="ic" style="stroke-width:1.400"/></svg>
<div class="abs" style="left:903px;top:2px;width:1px;height:13px;background:#333"></div>
<div class="abs" style="left:915px;top:4.5px;width:21px;height:20.500px;background:#181818;border-radius:4px"></div>
<div class="abs" style="left:947px;top:4.5px;width:21px;height:20.500px;background:#181818;border-radius:4px"></div>
<div class="abs" style="left:978.5px;top:4.5px;width:21px;height:20.500px;background:#181818;border-radius:4px"></div>
<div class="abs" style="left:999.5px;top:4.5px;width:12.500px;height:20.500px;background:#111;border-radius:0 4px 4px 0"></div>
<svg style="left:917.5px;top:7.0px" width="16" height="16" viewBox="0 0 16 16"><rect x="1" y="5" width="4.500" height="6" rx="1" fill="#16c0d2"/><rect x="10.500" y="5" width="4.500" height="6" rx="1" fill="#16c0d2"/><path d="M6 8H10M8 6.500L6.300 8L8 9.500" fill="none" stroke="#16c0d2" stroke-width="1.200"/></svg>
<svg style="left:949.5px;top:7.0px" width="16" height="16" viewBox="0 0 16 16"><rect x="1.500" y="5" width="13" height="6" rx="1.200" fill="#16c0d2"/><path d="M8 5.500V10.500" stroke="#181818" stroke-width="1.400"/><path d="M8 1V3M8 13V15M4.500 2L5.500 3.500M11.500 2L10.500 3.500M4.500 14L5.500 12.500M11.500 14L10.500 12.500" stroke="#16c0d2" stroke-width="1" fill="none"/></svg>
<svg style="left:981.0px;top:7.0px" width="16" height="16" viewBox="0 0 16 16"><rect x="1.500" y="5" width="13" height="6" rx="1.200" fill="#16c0d2"/><path d="M4 8H6.500M9.500 8H12M6.500 8H9.500" stroke="#181818" stroke-width="1.300"/><rect x="3.500" y="6.800" width="3.500" height="2.400" rx="1" fill="none" stroke="#181818" stroke-width=".9"/><rect x="9" y="6.800" width="3.500" height="2.400" rx="1" fill="none" stroke="#181818" stroke-width=".9"/></svg>
<svg style="left:1003.0px;top:11.5px" width="7" height="7" viewBox="0 0 7 7"><path d="M1 2L3.500 4.500L6 2" fill="none" stroke="#fff" stroke-width="1.400" stroke-linecap="round" stroke-linejoin="round"/></svg>
<svg style="left:1026.0px;top:7.0px" width="16" height="16" viewBox="0 0 16 16"><path d="M8 2V11M6 4.500H2V10.500H6M10 4.500H14V8" class="ic" style="stroke-width:1.400"/><path d="M9.500 8.500L14.500 11.500L12.300 12L13.300 14.200L12.300 14.700L11.300 12.500L9.800 13.800Z" fill="#e6e6e6"/></svg>
<svg style="left:1047.5px;top:11.5px" width="7" height="7" viewBox="0 0 7 7"><path d="M1 2L3.500 4.500L6 2" fill="none" stroke="#e6e6e6" stroke-width="1.400" stroke-linecap="round" stroke-linejoin="round"/></svg>
<div class="abs" style="left:1068px;top:2px;width:1px;height:13px;background:#333"></div>
<svg style="left:1082.0px;top:6.5px" width="16" height="16" viewBox="0 0 16 16"><path d="M1.500 10V4H14.500V10H12.500M1.500 10H4.500M4.500 4V6.500M7.500 4V6M10.500 4V6.500" class="ic" style="stroke-width:1.300"/><circle cx="8.300" cy="10.300" r="2.200" class="ic" style="stroke-width:1.200"/><path d="M10 12L11.300 13.300" class="ic" style="stroke-width:1.200"/></svg>
<svg style="left:1114.0px;top:7.0px" width="16" height="16" viewBox="0 0 16 16"><circle cx="7.500" cy="7.500" r="5.700" class="ic" style="stroke-width:1.400"/><path d="M5 7.500H10M11.800 11.800L14 14" class="ic" style="stroke-width:1.400"/></svg>
<svg style="left:1242.0px;top:7.0px" width="16" height="16" viewBox="0 0 16 16"><circle cx="7.500" cy="7.500" r="5.700" class="ic" style="stroke-width:1.400"/><path d="M5 7.500H10M7.500 5V10M11.800 11.800L14 14" class="ic" style="stroke-width:1.400"/></svg>
<div class="abs" style="left:1144px;top:14.299px;width:84px;height:1.400px;background:#0c0c0c"></div>
<div class="abs" style="left:1144px;top:14px;width:26px;height:2px;background:#f2f2f2;border-radius:1px"></div>
<div class="abs" style="left:1166px;top:9.5px;width:6px;height:11px;background:#fff;border-radius:2.500px"></div>
<div class="abs" style="left:0;top:64.600px;width:1259px;height:23.200px;background:#2a2a2a"></div><div class="abs" style="left:0;top:87.800px;width:1259px;height:2.400px;background:#222"></div>
<div class="abs" style="left:0;top:90.200px;width:1259px;height:67.800px;background:#2f2f2f;border-top:1.500px solid #353535"></div>
<div class="abs" style="left:109px;top:54px;width:1px;height:127px;background:#1a1a1a"></div>
<div class="abs" style="left:110px;top:54px;width:43px;height:127px;background:#262626"></div>
<div class="abs" style="left:155px;top:30.200px;width:891px;height:1.200px;background:#574a1a"></div>
<svg style="left:-8px;top:30px" width="1280" height="16" viewBox="0 0 1280 16"><rect x="162.6" y="3.500" width="1.200" height="10" fill="#5a5a5a"/><rect x="177.4" y="3.500" width="1" height="3.500" fill="#444"/><rect x="192.2" y="3.500" width="1" height="3.500" fill="#444"/><rect x="206.9" y="3.500" width="1" height="3.500" fill="#444"/><rect x="221.6" y="3.500" width="1" height="3.500" fill="#444"/><rect x="236.4" y="3.500" width="1" height="3.500" fill="#444"/><rect x="251.1" y="3.500" width="1" height="3.500" fill="#444"/><rect x="265.8" y="3.500" width="1" height="3.500" fill="#444"/><rect x="280.5" y="3.500" width="1" height="3.500" fill="#444"/><rect x="295.3" y="3.500" width="1" height="3.500" fill="#444"/><rect x="310.0" y="3.500" width="1" height="3.500" fill="#444"/><rect x="324.7" y="3.500" width="1" height="3.500" fill="#444"/><rect x="339.4" y="3.500" width="1.200" height="10" fill="#5a5a5a"/><rect x="354.2" y="3.500" width="1" height="3.500" fill="#444"/><rect x="368.9" y="3.500" width="1" height="3.500" fill="#444"/><rect x="383.7" y="3.500" width="1" height="3.500" fill="#444"/><rect x="398.4" y="3.500" width="1" height="3.500" fill="#444"/><rect x="413.1" y="3.500" width="1" height="3.500" fill="#444"/><rect x="427.9" y="3.500" width="1" height="3.500" fill="#444"/><rect x="442.6" y="3.500" width="1" height="3.500" fill="#444"/><rect x="457.3" y="3.500" width="1" height="3.500" fill="#444"/><rect x="472.0" y="3.500" width="1" height="3.500" fill="#444"/><rect x="486.8" y="3.500" width="1" height="3.500" fill="#444"/><rect x="501.5" y="3.500" width="1" height="3.500" fill="#444"/><rect x="516.1" y="3.500" width="1.200" height="10" fill="#5a5a5a"/><rect x="531.0" y="3.500" width="1" height="3.500" fill="#444"/><rect x="545.7" y="3.500" width="1" height="3.500" fill="#444"/><rect x="560.4" y="3.500" width="1" height="3.500" fill="#444"/><rect x="575.2" y="3.500" width="1" height="3.500" fill="#444"/><rect x="589.9" y="3.500" width="1" height="3.500" fill="#444"/><rect x="604.6" y="3.500" width="1" height="3.500" fill="#444"/><rect x="619.4" y="3.500" width="1" height="3.500" fill="#444"/><rect x="634.1" y="3.500" width="1" height="3.500" fill="#444"/><rect x="648.8" y="3.500" width="1" height="3.500" fill="#444"/><rect x="663.5" y="3.500" width="1" height="3.500" fill="#444"/><rect x="678.3" y="3.500" width="1" height="3.500" fill="#444"/><rect x="692.9" y="3.500" width="1.200" height="10" fill="#5a5a5a"/><rect x="707.7" y="3.500" width="1" height="3.500" fill="#444"/><rect x="722.5" y="3.500" width="1" height="3.500" fill="#444"/><rect x="737.2" y="3.500" width="1" height="3.500" fill="#444"/><rect x="751.9" y="3.500" width="1" height="3.500" fill="#444"/><rect x="766.7" y="3.500" width="1" height="3.500" fill="#444"/><rect x="781.4" y="3.500" width="1" height="3.500" fill="#444"/><rect x="796.1" y="3.500" width="1" height="3.500" fill="#444"/><rect x="810.9" y="3.500" width="1" height="3.500" fill="#444"/><rect x="825.6" y="3.500" width="1" height="3.500" fill="#444"/><rect x="840.3" y="3.500" width="1" height="3.500" fill="#444"/><rect x="855.0" y="3.500" width="1" height="3.500" fill="#444"/><rect x="869.7" y="3.500" width="1.200" height="10" fill="#5a5a5a"/><rect x="884.5" y="3.500" width="1" height="3.500" fill="#444"/><rect x="899.2" y="3.500" width="1" height="3.500" fill="#444"/><rect x="914.0" y="3.500" width="1" height="3.500" fill="#444"/><rect x="928.7" y="3.500" width="1" height="3.500" fill="#444"/><rect x="943.4" y="3.500" width="1" height="3.500" fill="#444"/><rect x="958.2" y="3.500" width="1" height="3.500" fill="#444"/><rect x="972.9" y="3.500" width="1" height="3.500" fill="#444"/><rect x="987.6" y="3.500" width="1" height="3.500" fill="#444"/><rect x="1002.4" y="3.500" width="1" height="3.500" fill="#444"/><rect x="1017.1" y="3.500" width="1" height="3.500" fill="#444"/><rect x="1031.8" y="3.500" width="1" height="3.500" fill="#444"/><rect x="1046.5" y="3.500" width="1.200" height="10" fill="#5a5a5a"/><rect x="1061.3" y="3.500" width="1" height="3.500" fill="#444"/><rect x="1076.0" y="3.500" width="1" height="3.500" fill="#444"/><rect x="1090.7" y="3.500" width="1" height="3.500" fill="#444"/><rect x="1105.5" y="3.500" width="1" height="3.500" fill="#444"/><rect x="1120.2" y="3.500" width="1" height="3.500" fill="#444"/><rect x="1134.9" y="3.500" width="1" height="3.500" fill="#444"/><rect x="1149.7" y="3.500" width="1" height="3.500" fill="#444"/><rect x="1164.4" y="3.500" width="1" height="3.500" fill="#444"/><rect x="1179.1" y="3.500" width="1" height="3.500" fill="#444"/><rect x="1193.9" y="3.500" width="1" height="3.500" fill="#444"/><rect x="1208.6" y="3.500" width="1" height="3.500" fill="#444"/><rect x="1223.2" y="3.500" width="1.200" height="10" fill="#5a5a5a"/><rect x="1238.1" y="3.500" width="1" height="3.500" fill="#444"/><rect x="1252.8" y="3.500" width="1" height="3.500" fill="#444"/></svg>
<div class="t" style="left:158.2px;top:31.5px;font-size:9.5px;color:#6e6e6e;">00:00</div>
<div class="t" style="left:334.97px;top:31.5px;font-size:9.5px;color:#6e6e6e;">00:01</div>
<div class="t" style="left:511.74px;top:31.5px;font-size:9.5px;color:#6e6e6e;">00:02</div>
<div class="t" style="left:688.51px;top:31.5px;font-size:9.5px;color:#6e6e6e;">00:03</div>
<div class="t" style="left:865.28px;top:31.5px;font-size:9.5px;color:#6e6e6e;">00:04</div>
<div class="t" style="left:1042.05px;top:31.5px;font-size:9.5px;color:#6e6e6e;">00:05</div>
<div class="t" style="left:1218.820px;top:31.5px;font-size:9.5px;color:#6e6e6e;">00:06</div>
<svg style="left:5.0px;top:69.0px" width="14" height="14" viewBox="0 0 14 14"><circle cx="7" cy="7" r="5.200" fill="none" stroke="#777" stroke-width="1.100"/><path d="M7 1.800V7L11 9.500" fill="none" stroke="#777" stroke-width="1.100"/></svg>
<svg style="left:28.75px;top:70.25px" width="10.5" height="10.5" viewBox="0 0 14 14"><rect x="2.500" y="6" width="9" height="6.500" rx="1.200" fill="none" stroke="#d0d0d0" stroke-width="1.300"/><path d="M4.500 6V4.500A2.500 2.500 0 0 1 9.500 4.500V6" fill="none" stroke="#d0d0d0" stroke-width="1.300"/><rect x="3" y="9" width="8" height="3" fill="#d0d0d0"/></svg>
<svg style="left:49.25px;top:70.25px" width="11.5" height="11.5" viewBox="0 0 14 14"><path d="M1.200 7C3 3.800 5 3 7 3S11 3.800 12.800 7C11 10.200 9 11 7 11S3 10.200 1.200 7Z" fill="none" stroke="#d0d0d0" stroke-width="1.200"/><circle cx="7" cy="7" r="2" fill="none" stroke="#d0d0d0" stroke-width="1.200"/></svg>
<svg style="left:5.0px;top:117.0px" width="14" height="14" viewBox="0 0 14 14"><rect x="1.500" y="3" width="11" height="8" rx="1" fill="none" stroke="#777" stroke-width="1"/><path d="M5.800 5.200V8.800L8.800 7Z" fill="#777"/></svg>
<svg style="left:28.75px;top:118.25px" width="10.5" height="10.5" viewBox="0 0 14 14"><rect x="2.500" y="6" width="9" height="6.500" rx="1.200" fill="none" stroke="#d0d0d0" stroke-width="1.300"/><path d="M4.500 6V4.500A2.500 2.500 0 0 1 9.500 4.500V6" fill="none" stroke="#d0d0d0" stroke-width="1.300"/><rect x="3" y="9" width="8" height="3" fill="#d0d0d0"/></svg>
<svg style="left:49.25px;top:118.25px" width="11.5" height="11.5" viewBox="0 0 14 14"><path d="M1.200 7C3 3.800 5 3 7 3S11 3.800 12.800 7C11 10.200 9 11 7 11S3 10.200 1.200 7Z" fill="none" stroke="#d0d0d0" stroke-width="1.200"/><circle cx="7" cy="7" r="2" fill="none" stroke="#d0d0d0" stroke-width="1.200"/></svg>
<svg style="left:69.0px;top:117.0px" width="14" height="14" viewBox="0 0 14 14"><path d="M1.500 5.500H3.500L6.500 3V11L3.500 8.500H1.500Z" fill="none" stroke="#d0d0d0" stroke-width="1.100" stroke-linejoin="round"/><path d="M8.500 5.200A2.500 2.500 0 0 1 8.500 8.800M10.300 3.800A4.500 4.500 0 0 1 10.300 10.200" fill="none" stroke="#d0d0d0" stroke-width="1.100" stroke-linecap="round"/></svg>
<svg style="left:90.5px;top:117.0px" width="14" height="14" viewBox="0 0 14 14"><circle cx="3" cy="7" r=".9" fill="#d0d0d0"/><circle cx="7" cy="7" r=".9" fill="#d0d0d0"/><circle cx="11" cy="7" r=".9" fill="#d0d0d0"/></svg>
<div class="abs" style="left:114px;top:107px;width:33.500px;height:34px;background:#333;border:1px dashed #444;border-radius:4px"></div>
<svg style="left:123.5px;top:111.0px" width="14" height="14" viewBox="0 0 14 14"><path d="M3.500 9L9.500 3L11.500 5L5.500 11H3.500ZM3 13H12" class="ic" style="stroke-width:1.100;stroke:#d8d8d8"/></svg>
<div class="t" style="left:114px;width:33.500px;text-align:center;top:124px;font-size:9.500px;color:#d8d8d8">Cover</div>
<div class="abs" style="left:155px;top:67px;width:891px;height:18px;background:#d9952d;border-radius:4px"></div>
<svg style="left:157px;top:68px" width="14" height="15" viewBox="0 0 14 15"><path d="M1.300 2.800C3 1.600 5.500 1.800 6.300 3.200C6.300 7 5.200 10.500 3.800 12.200C2.200 10.200 1 6.500 1.300 2.800Z" fill="#14245e" stroke="#f0a3bd" stroke-width=".8"/><path d="M7.700 3.200C8.500 1.800 11 1.600 12.700 2.800C13 6.500 11.800 10.200 10.200 12.200C8.800 10.500 7.700 7 7.700 3.200Z" fill="#14245e" stroke="#f0a3bd" stroke-width=".8"/><path d="M3.800 4V8M10.200 4V8" stroke="#5c7cc4" stroke-width=".7"/></svg>
<svg style="left:172.0px;top:69.299px" width="14" height="14" viewBox="0 0 14 14"><circle cx="7" cy="7" r="4.300" fill="none" stroke="#fff" stroke-width="1.400"/><circle cx="7" cy="7" r="1.500" fill="#fff"/><path d="M7 .8V3M7 11V13.200M.8 7H3M11 7H13.200" stroke="#fff" stroke-width="1.400"/></svg>
<div class="abs" style="left:186.5px;top:69.5px;width:38px;height:13.500px;background:rgba(255,255,255,.14);border-radius:2px"></div>
<div class="t" style="left:189px;top:68.800px;font-size:9px;color:#f3dfc0;">Tracking</div>
<div id="clip" class="abs" style="left:152px;top:92px;width:896.500px;height:64.500px;background:#fff;border-radius:4px"></div>
<div class="abs" style="left:155px;top:93.299px;width:892px;height:62px;background:#00525b;border-radius:0 3px 3px 0;overflow:hidden"><div class="abs" style="left:0;top:.6px;width:884px;height:2px;background:#c9a21c"></div><div id="strip" class="abs" style="left:0;top:14.600px;width:889.600px;overflow:hidden;height:33.900px;background:#e6dfd6"><svg style="left:0.60px;top:0" width="44.440" height="33.900"><use href="#cat" width="44.440" height="33.900"/></svg><svg style="left:45.04px;top:0" width="44.440" height="33.900"><use href="#cat" width="44.440" height="33.900"/></svg><svg style="left:89.48px;top:0" width="44.440" height="33.900"><use href="#cat" width="44.440" height="33.900"/></svg><svg style="left:133.92px;top:0" width="44.440" height="33.900"><use href="#cat" width="44.440" height="33.900"/></svg><svg style="left:178.36px;top:0" width="44.440" height="33.900"><use href="#cat" width="44.440" height="33.900"/></svg><svg style="left:222.80px;top:0" width="44.440" height="33.900"><use href="#cat" width="44.440" height="33.900"/></svg><svg style="left:267.24px;top:0" width="44.440" height="33.900"><use href="#cat" width="44.440" height="33.900"/></svg><svg style="left:311.68px;top:0" width="44.440" height="33.900"><use href="#cat" width="44.440" height="33.900"/></svg><svg style="left:356.12px;top:0" width="44.440" height="33.900"><use href="#cat" width="44.440" height="33.900"/></svg><svg style="left:400.56px;top:0" width="44.440" height="33.900"><use href="#cat" width="44.440" height="33.900"/></svg><svg style="left:445.00px;top:0" width="44.440" height="33.900"><use href="#cat" width="44.440" height="33.900"/></svg><svg style="left:489.44px;top:0" width="44.440" height="33.900"><use href="#cat" width="44.440" height="33.900"/></svg><svg style="left:533.88px;top:0" width="44.440" height="33.900"><use href="#cat" width="44.440" height="33.900"/></svg><svg style="left:578.32px;top:0" width="44.440" height="33.900"><use href="#cat" width="44.440" height="33.900"/></svg><svg style="left:622.76px;top:0" width="44.440" height="33.900"><use href="#cat" width="44.440" height="33.900"/></svg><svg style="left:667.20px;top:0" width="44.440" height="33.900"><use href="#cat" width="44.440" height="33.900"/></svg><svg style="left:711.64px;top:0" width="44.440" height="33.900"><use href="#cat" width="44.440" height="33.900"/></svg><svg style="left:756.08px;top:0" width="44.440" height="33.900"><use href="#cat" width="44.440" height="33.900"/></svg><svg style="left:800.52px;top:0" width="44.440" height="33.900"><use href="#cat" width="44.440" height="33.900"/></svg><svg style="left:844.96px;top:0" width="44.440" height="33.900"><use href="#cat" width="44.440" height="33.900"/></svg></div></div>
<svg style="left:159.300px;top:95px" width="10" height="10" viewBox="0 0 12 12"><path d="M6 .8C6.400 4 8 5.600 11.200 6C8 6.400 6.400 8 6 11.200C5.600 8 4 6.400 .8 6C4 5.600 5.600 4 6 .8Z" fill="none" stroke="#fff" stroke-width="1.700" stroke-linejoin="round"/></svg>
<div class="abs" style="left:171.5px;top:93.5px;width:40.500px;height:11.500px;background:rgba(255,255,255,.13);border-radius:2px"></div>
<div class="t" style="left:174px;top:92.299px;font-size:8.900px;color:#dfeff0;">AI media</div>
<div class="abs" style="left:214px;top:93.5px;width:55.500px;height:11.500px;background:rgba(255,255,255,.13);border-radius:2px"></div>
<div class="t" style="left:216.5px;top:92.299px;font-size:9.200px;color:#dfeff0;">00:00:05:01</div>
<div class="abs" style="left:112px;top:173.800px;width:1145px;height:5px;background:#424242;border-radius:2.500px"></div>
<div class="abs" style="left:154px;top:39px;width:1.300px;height:130px;background:#fff"></div>
<svg style="left:150px;top:29.5px" width="10" height="13" viewBox="0 0 10 13"><path d="M1 1H9V7.500Q9 11.800 5 11.800Q1 11.800 1 7.500Z" fill="#1b1b1b" stroke="#fff" stroke-width="1.600" stroke-linejoin="round"/></svg>
</div>
<div class="abs" style="left:373px;top:561.200px;width:99px;height:68px;border:4px solid #f4514b;border-radius:6px;background:rgba(0,0,0,.28)"></div>
<div class="abs" style="left:376px;top:588px;width:89.500px;height:21.500px;background:#fff;border-radius:4px"></div>
<svg style="left:382px;top:591.500px" width="14" height="14" viewBox="0 0 14 14"><defs><radialGradient id="blob" cx=".4" cy=".45" r=".6"><stop offset="0" stop-color="#6a5cf0"/><stop offset=".6" stop-color="#7fb4f6"/><stop offset="1" stop-color="#bfe0fb" stop-opacity="0"/></radialGradient></defs><circle cx="7" cy="7" r="6.500" fill="url(#blob)"/></svg>
<div class="t" style="left:403px;top:592px;font-size:10.100px;color:#111;-webkit-text-stroke:.3px #111">Regenerate</div>
<div class="abs" style="left:436px;top:583px;width:29px;height:9.500px;background:#222;border:1px solid #3c3c3c;border-radius:2.500px"></div>
<svg style="left:438px;top:583.800px" width="8" height="8" viewBox="0 0 10 10"><path d="M5 .3C5.300 3 6.800 4.600 9.700 5C6.800 5.400 5.300 7 5 9.700C4.700 7 3.200 5.400 .3 5C3.200 4.600 4.700 3 5 .3Z" fill="#3dc0f0"/></svg>
<div class="t" style="left:447.500px;top:580.800px;font-size:9.500px;color:#e0e0e0">40</div>
<div class="abs" style="left:0;top:0;width:1280px;height:1px;background:#242424"></div><div class="abs" style="left:0;top:0;width:1px;height:810px;background:#1e1e1e"></div><div class="abs" style="left:1279px;top:0;width:1px;height:810px;background:#1c1c1c"></div><div class="abs" style="left:0;top:809px;width:1280px;height:1px;background:#1c1c1c"></div>
</body>
</html>
